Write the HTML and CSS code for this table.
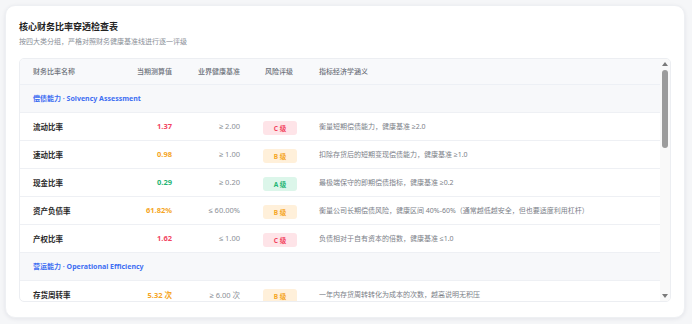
FILE: index.html
```html
<!DOCTYPE html>
<html lang="zh-CN">
<head>
<meta charset="utf-8">
<title>核心财务比率穿透检查表</title>
<link rel="stylesheet" href="styles.css">
</head>
<body>
<div class="page">
  <section class="card">
    <h1 class="title">核心财务比率穿透检查表</h1>
    <p class="subtitle">按四大类分组，严格对照财务健康基准线进行逐一评级</p>
    <div class="table-box">
      <div class="table-wrap">
        <table class="ratio-table">
          <colgroup>
            <col class="c-name"><col class="c-val"><col class="c-bench"><col class="c-rate"><col class="c-desc">
          </colgroup>
          <thead>
            <tr>
              <th class="t-name">财务比率名称</th>
              <th class="t-right">当期测算值</th>
              <th class="t-right">业界健康基准</th>
              <th class="t-rate">风险评级</th>
              <th class="t-desc">指标经济学涵义</th>
            </tr>
          </thead>
          <tbody>
            <tr class="group"><td colspan="5">偿债能力 · Solvency Assessment</td></tr>
            <tr>
              <td class="name">流动比率</td>
              <td class="val red">1.37</td>
              <td class="bench">≥ 2.00</td>
              <td class="rate"><span class="badge badge-c">C 级</span></td>
              <td class="desc">衡量短期偿债能力，健康基准 ≥2.0</td>
            </tr>
            <tr>
              <td class="name">速动比率</td>
              <td class="val orange">0.98</td>
              <td class="bench">≥ 1.00</td>
              <td class="rate"><span class="badge badge-b">B 级</span></td>
              <td class="desc">扣除存货后的短期变现偿债能力，健康基准 ≥1.0</td>
            </tr>
            <tr>
              <td class="name">现金比率</td>
              <td class="val green">0.29</td>
              <td class="bench">≥ 0.20</td>
              <td class="rate"><span class="badge badge-a">A 级</span></td>
              <td class="desc">最极端保守的即期偿债指标，健康基准 ≥0.2</td>
            </tr>
            <tr>
              <td class="name">资产负债率</td>
              <td class="val orange">61.82%</td>
              <td class="bench">≤ 60.00%</td>
              <td class="rate"><span class="badge badge-b">B 级</span></td>
              <td class="desc">衡量公司长期偿债风险，健康区间 40%-60%（通常越低越安全，但也要适度利用杠杆）</td>
            </tr>
            <tr>
              <td class="name">产权比率</td>
              <td class="val red">1.62</td>
              <td class="bench">≤ 1.00</td>
              <td class="rate"><span class="badge badge-c">C 级</span></td>
              <td class="desc">负债相对于自有资本的倍数，健康基准 ≤1.0</td>
            </tr>
            <tr class="group"><td colspan="5">营运能力 · Operational Efficiency</td></tr>
            <tr>
              <td class="name">存货周转率</td>
              <td class="val orange">5.32 次</td>
              <td class="bench">≥ 6.00 次</td>
              <td class="rate"><span class="badge badge-b">B 级</span></td>
              <td class="desc">一年内存货周转转化为成本的次数，越高说明无积压</td>
            </tr>
          </tbody>
        </table>
      </div>
      <div class="scrollbar">
        <span class="arrow arrow-up"></span>
        <span class="thumb"></span>
        <span class="track-rest"></span>
        <span class="arrow arrow-down"></span>
      </div>
    </div>
  </section>
</div>
</body>
</html>
```

FILE: styles.css
```css
* { box-sizing: border-box; }
html, body { margin: 0; padding: 0; }
body {
  background: #f5f6f8;
  font-family: "Noto Sans", "Liberation Sans", "Noto Sans CJK SC", sans-serif;
  color: #333;
}
.page {
  width: 692px;
  height: 324px;
  padding: 5px 7px 6px 5px;
}
.card {
  height: 313px;
  background: #fff;
  border-radius: 10px;
  box-shadow: 0 1px 4px rgba(20, 30, 60, 0.08);
  border: 1px solid #eef0f3;
  padding: 14px 13px 15px 13px;
  display: flex;
  flex-direction: column;
}
.title {
  margin: 0;
  font-size: 9px;
  line-height: 13px;
  font-weight: 700;
  color: #222;
}
.subtitle {
  margin: 4px 0 0;
  font-size: 7px;
  line-height: 10px;
  color: #8a8f98;
}
.table-box {
  margin-top: 11px;
  height: 244px;
  border: 1px solid #eceef2;
  border-radius: 5px;
  display: flex;
  overflow: hidden;
}
.table-wrap {
  flex: 1;
  overflow: hidden;
}
.ratio-table {
  width: 640px;
  table-layout: fixed;
  border-collapse: collapse;
  border-spacing: 0;
}
.c-name { width: 104px; }
.c-val { width: 60px; }
.c-bench { width: 68px; }
.c-rate { width: 55px; }
.c-desc { width: 353px; }
.ratio-table th {
  height: 25px;
  background: #f8f9fb;
  border-bottom: 1px solid #edf0f5;
  font-size: 7px;
  font-weight: 500;
  color: #6b7079;
  text-align: left;
  padding: 0;
  white-space: nowrap;
}
.ratio-table td {
  height: 28px;
  border-bottom: 1px solid #eef0f4;
  padding: 0;
  white-space: nowrap;
  overflow: hidden;
}
.t-name, .name { padding-left: 13px !important; }
.t-right { text-align: right !important; padding-right: 12px !important; }
.t-rate { padding-left: 13px !important; }
.t-desc, .desc { padding-left: 12px !important; }
.group td {
  background: #f7f8fa;
  padding-left: 13px;
  font-size: 7px;
  font-weight: 700;
  color: #3e6ef2;
}
.name {
  font-size: 7.5px;
  font-weight: 700;
  color: #2a2a2a;
}
.val {
  text-align: right;
  padding-right: 12px !important;
  font-size: 7.5px;
  font-weight: 700;
}
.red { color: #f2455f; }
.orange { color: #f5a524; }
.green { color: #1fb574; }
.bench {
  text-align: right;
  padding-right: 12px !important;
  font-size: 7.5px;
  color: #8b8f96;
}
.rate { padding-left: 11px !important; }
.badge {
  display: inline-flex;
  align-items: center;
  justify-content: center;
  width: 34px;
  height: 14px;
  border-radius: 3px;
  font-size: 6.5px;
  font-weight: 700;
  vertical-align: middle;
}
.badge-c { background: #fee4e8; color: #f2455f; }
.badge-b { background: #fff0da; color: #f5a524; }
.badge-a { background: #dcf6ea; color: #1fb574; }
.desc {
  font-size: 7px;
  color: #7b8088;
}
.scrollbar {
  width: 10px;
  background: #f9f9f9;
  display: flex;
  flex-direction: column;
  align-items: center;
  padding: 3px 0 3px;
}
.arrow {
  width: 0;
  height: 0;
  border-left: 3px solid transparent;
  border-right: 3px solid transparent;
}
.arrow-up { border-bottom: 4px solid #7a7a7a; }
.arrow-down { border-top: 4px solid #7a7a7a; }
.thumb {
  margin-top: 4px;
  width: 6px;
  height: 78px;
  border-radius: 3px;
  background: #9c9c9c;
}
.track-rest { flex: 1; }
```
